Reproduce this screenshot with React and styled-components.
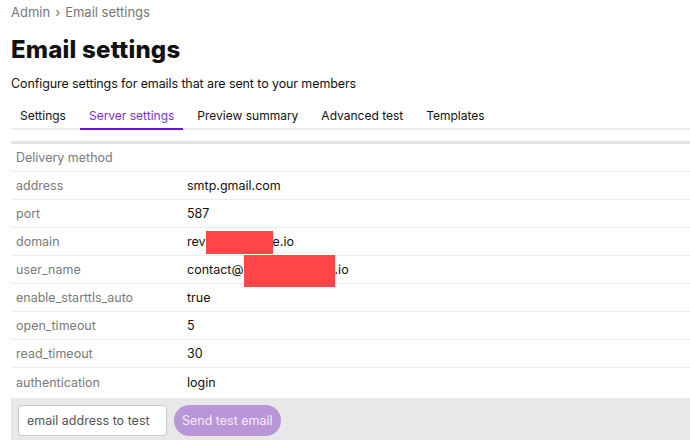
import React, { useState } from 'react';
import styled, { createGlobalStyle } from 'styled-components';

const GlobalStyle = createGlobalStyle`
  body {
    margin: 0;
    background: #fff;
    font-family: Inter, "Open Sans", sans-serif;
    color: #111;
  }
`;

const Page = styled.div`
  padding: 4px 0 0 11px;
  width: 690px;
  height: 440px;
  box-sizing: border-box;
  overflow: hidden;
`;

const Crumbs = styled.div`
  display: flex;
  align-items: center;
  gap: 5px;
  font-size: 13px;
  color: #777;
  height: 16px;
`;

const Title = styled.h1`
  margin: 15px 0 0;
  font-size: 24px;
  font-weight: 800;
  letter-spacing: 0.2px;
  line-height: 30px;
`;

const Subtitle = styled.p`
  margin: 10px 0 0;
  font-size: 12.5px;
  line-height: 18px;
  letter-spacing: -0.1px;
`;

const Tabs = styled.div`
  display: flex;
  margin-top: 15px;
  border-bottom: 2px solid #eee;
`;

const Tab = styled.button`
  border: none;
  background: none;
  font-family: inherit;
  font-size: 12px;
  padding: 0 9px 5px;
  margin-right: 5px;
  color: ${p => (p.$active ? '#7a2fd6' : '#111')};
  border-bottom: 2px solid ${p => (p.$active ? '#6a14d8' : 'transparent')};
  margin-bottom: -2px;
  cursor: pointer;
`;

const Table = styled.div`
  margin-top: 11px;
  border-top: 3px solid #e3e3e3;
`;

const Row = styled.div`
  display: grid;
  grid-template-columns: 176px 1fr;
  align-items: center;
  height: 28px;
  border-bottom: ${p => (p.$last ? 'none' : '1.5px solid #ececec')};
  font-size: 12.5px;
  box-sizing: border-box;
`;

const Key = styled.div`
  padding-left: 5px;
  color: #7a7a7a;
`;

const Value = styled.div`
  color: #111;
`;

const Hidden = styled.span`
  position: relative;
  display: inline-block;
  width: ${p => p.$w}px;
  height: 1em;
  vertical-align: middle;

  &::after {
    content: '';
    position: absolute;
    left: 0;
    right: 0;
    top: ${p => p.$top}px;
    height: ${p => p.$h}px;
    background: #ff4548;
  }
`;

const Footer = styled.div`
  display: flex;
  align-items: center;
  gap: 7px;
  background: #e8e8e8;
  padding: 0 7px;
  height: 44px;
  margin-top: 2px;
`;

const Input = styled.input`
  width: 149px;
  height: 31px;
  box-sizing: border-box;
  border: 1px solid #c8c8c8;
  border-radius: 4px;
  padding: 0 8px;
  font-family: inherit;
  font-size: 12.5px;
  color: #333;
  &::placeholder {
    color: #555;
  }
  &:focus {
    outline: none;
  }
`;

const SendButton = styled.button`
  height: 31px;
  padding: 0 8px;
  border: none;
  border-radius: 16px;
  background: #b996d8;
  color: #f3ecfa;
  font-family: inherit;
  font-size: 12.5px;
`;

const tabs = ['Settings', 'Server settings', 'Preview summary', 'Advanced test', 'Templates'];

const rows = [
  { key: 'Delivery method', value: '' },
  { key: 'address', value: 'smtp.gmail.com' },
  { key: 'port', value: '587' },
  { key: 'domain', before: 'rev', after: 'e.io', mask: { w: 67, top: -5, h: 23 } },
  { key: 'user_name', before: 'contact@', after: '.io', mask: { w: 91, top: -9, h: 32 } },
  { key: 'enable_starttls_auto', value: 'true' },
  { key: 'open_timeout', value: '5' },
  { key: 'read_timeout', value: '30' },
  { key: 'authentication', value: 'login' },
];

export default function App() {
  const [active, setActive] = useState(1);
  const [email, setEmail] = useState('');

  return (
    <Page>
      <GlobalStyle />
      <Crumbs>
        <span>Admin</span>
        <span>›</span>
        <span>Email settings</span>
      </Crumbs>
      <Title>Email settings</Title>
      <Subtitle>Configure settings for emails that are sent to your members</Subtitle>
      <Tabs>
        {tabs.map((t, i) => (
          <Tab key={t} $active={i === active} onClick={() => setActive(i)}>
            {t}
          </Tab>
        ))}
      </Tabs>
      <Table>
        {rows.map((r, i) => (
          <Row key={r.key} $last={i === rows.length - 1}>
            <Key>{r.key}</Key>
            <Value>
              {r.mask ? (
                <>
                  {r.before}
                  <Hidden $w={r.mask.w} $top={r.mask.top} $h={r.mask.h} />
                  {r.after}
                </>
              ) : (
                r.value
              )}
            </Value>
          </Row>
        ))}
      </Table>
      <Footer>
        <Input
          value={email}
          onChange={e => setEmail(e.target.value)}
          placeholder="email address to test"
        />
        <SendButton>Send test email</SendButton>
      </Footer>
    </Page>
  );
}
